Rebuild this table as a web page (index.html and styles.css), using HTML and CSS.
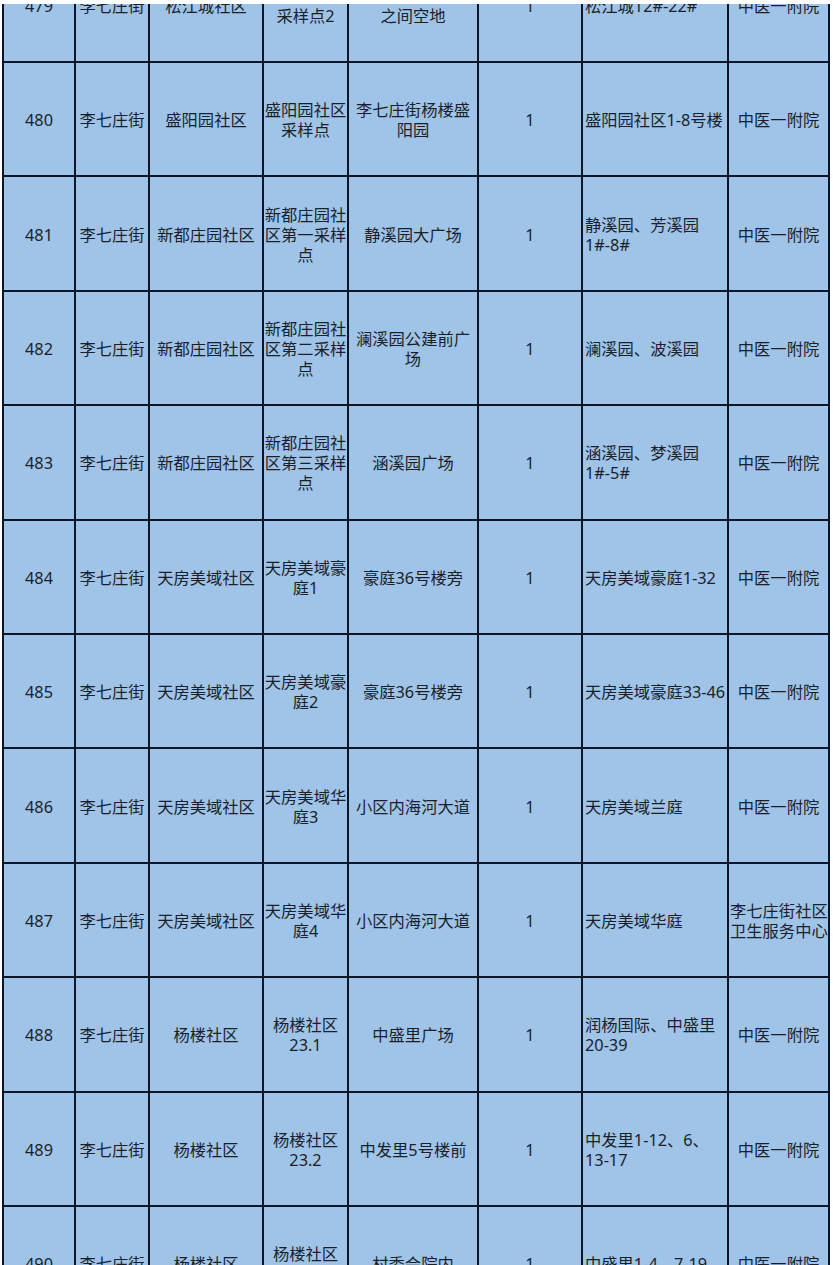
FILE: index.html
```html
<!DOCTYPE html>
<html lang="zh-CN">
<head>
<meta charset="utf-8">
<title>采样点</title>
<link rel="stylesheet" href="styles.css">
</head>
<body>
<div class="sheet">
  <div class="grid">
    <div class="c">479</div><div class="c">李七庄街</div><div class="c">松江城社区</div><div class="c">松江城社区<br>采样点2</div><div class="c">松江城12#与<br>之间空地</div><div class="c">1</div><div class="c l">松江城12#-22#</div><div class="c">中医一附院</div>

    <div class="c">480</div><div class="c">李七庄街</div><div class="c">盛阳园社区</div><div class="c">盛阳园社区<br>采样点</div><div class="c">李七庄街杨楼盛<br>阳园</div><div class="c">1</div><div class="c l">盛阳园社区1-8号楼</div><div class="c">中医一附院</div>

    <div class="c">481</div><div class="c">李七庄街</div><div class="c">新都庄园社区</div><div class="c">新都庄园社<br>区第一采样<br>点</div><div class="c">静溪园大广场</div><div class="c">1</div><div class="c l">静溪园、芳溪园<br>1#-8#</div><div class="c">中医一附院</div>

    <div class="c">482</div><div class="c">李七庄街</div><div class="c">新都庄园社区</div><div class="c">新都庄园社<br>区第二采样<br>点</div><div class="c">澜溪园公建前广<br>场</div><div class="c">1</div><div class="c l">澜溪园、波溪园</div><div class="c">中医一附院</div>

    <div class="c">483</div><div class="c">李七庄街</div><div class="c">新都庄园社区</div><div class="c">新都庄园社<br>区第三采样<br>点</div><div class="c">涵溪园广场</div><div class="c">1</div><div class="c l">涵溪园、梦溪园<br>1#-5#</div><div class="c">中医一附院</div>

    <div class="c">484</div><div class="c">李七庄街</div><div class="c">天房美域社区</div><div class="c">天房美域豪<br>庭1</div><div class="c">豪庭36号楼旁</div><div class="c">1</div><div class="c l">天房美域豪庭1-32</div><div class="c">中医一附院</div>

    <div class="c">485</div><div class="c">李七庄街</div><div class="c">天房美域社区</div><div class="c">天房美域豪<br>庭2</div><div class="c">豪庭36号楼旁</div><div class="c">1</div><div class="c l clip"><span class="nowrap">天房美域豪庭33-46</span></div><div class="c">中医一附院</div>

    <div class="c">486</div><div class="c">李七庄街</div><div class="c">天房美域社区</div><div class="c">天房美域华<br>庭3</div><div class="c">小区内海河大道</div><div class="c">1</div><div class="c l">天房美域兰庭</div><div class="c">中医一附院</div>

    <div class="c">487</div><div class="c">李七庄街</div><div class="c">天房美域社区</div><div class="c">天房美域华<br>庭4</div><div class="c">小区内海河大道</div><div class="c">1</div><div class="c l">天房美域华庭</div><div class="c l tight clip"><span class="nowrap">李七庄街社区<br>卫生服务中心</span></div>

    <div class="c">488</div><div class="c">李七庄街</div><div class="c">杨楼社区</div><div class="c">杨楼社区<br>23.1</div><div class="c">中盛里广场</div><div class="c">1</div><div class="c l">润杨国际、中盛里<br>20-39</div><div class="c">中医一附院</div>

    <div class="c">489</div><div class="c">李七庄街</div><div class="c">杨楼社区</div><div class="c">杨楼社区<br>23.2</div><div class="c">中发里5号楼前</div><div class="c">1</div><div class="c l">中发里1-12、6、<br>13-17</div><div class="c">中医一附院</div>

    <div class="c">490</div><div class="c">李七庄街</div><div class="c">杨楼社区</div><div class="c">杨楼社区<br>23.3</div><div class="c">村委会院内</div><div class="c">1</div><div class="c l">中盛里1-4、7-19</div><div class="c">中医一附院</div>
  </div>
</div>
</body>
</html>
```

FILE: styles.css
```css
html, body {
  margin: 0;
  padding: 0;
  background: #ffffff;
}

.sheet {
  margin: 4px 0 0 2px;
  width: 828px;
  height: 1261px;
  overflow: hidden;
}

.grid {
  display: grid;
  grid-template-columns: 72px 74px 114px 85px 130px 104px 146px 101px;
  grid-auto-rows: 114.4px;
  margin-top: -55.4px;
  border-left: 2px solid #0c1628;
  background: #9fc4e7;
  font-family: "Noto Sans", "Noto Sans CJK SC", sans-serif;
  font-size: 16.3px;
  line-height: 20px;
  color: #1a1f2b;
}

.c {
  box-sizing: border-box;
  border-right: 2px solid #0c1628;
  border-bottom: 2px solid #0c1628;
  display: flex;
  align-items: center;
  justify-content: center;
  text-align: center;
  padding: 2px 0 0 0;
  min-width: 0;
}

.l {
  justify-content: flex-start;
  text-align: left;
  padding-left: 2px;
}

.tight {
  padding-left: 1px;
}

.clip {
  overflow: hidden;
}

.nowrap {
  white-space: nowrap;
}
```
